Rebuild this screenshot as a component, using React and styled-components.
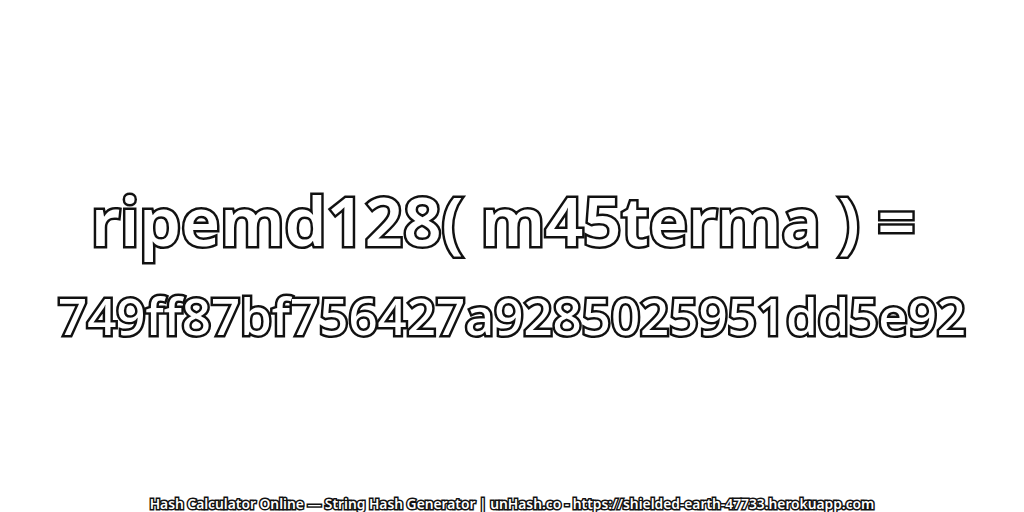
import React from 'react';
import styled, { createGlobalStyle } from 'styled-components';

const Global = createGlobalStyle`
  html, body {
    margin: 0;
    padding: 0;
    background: #fff;
  }
`;

const Page = styled.div`
  width: 1024px;
  height: 512px;
  display: flex;
  flex-direction: column;
  align-items: center;
  overflow: hidden;
  background: #fff;
  font-family: "Noto Sans", "Open Sans", sans-serif;
`;

const Hash = styled.div`
  flex: 1;
  display: flex;
  flex-direction: column;
  align-items: center;
  gap: 5px;
  padding-top: 175px;
`;

const Line = styled.div`
  font-size: ${(p) => p.size}px;
  font-weight: ${(p) => p.weight};
  line-height: 90px;
  white-space: pre;
  color: #fff;
  -webkit-text-stroke: 5px #111;
  paint-order: stroke fill;
`;

const Footer = styled.div`
  font-size: 13.8px;
  line-height: 16px;
  font-weight: 600;
  white-space: nowrap;
  color: #fff;
  -webkit-text-stroke: 3px #111;
  paint-order: stroke fill;
`;

export default function App() {
  return (
    <Page>
      <Global />
      <Hash>
        <Line size={67} weight={600}>{'ripemd128( m45terma ) = '}</Line>
        <Line size={51} weight={500}>749ff87bf756427a9285025951dd5e92</Line>
      </Hash>
      <Footer>Hash Calculator Online — String Hash Generator | unHash.co - https://shielded-earth-47733.herokuapp.com</Footer>
    </Page>
  );
}
